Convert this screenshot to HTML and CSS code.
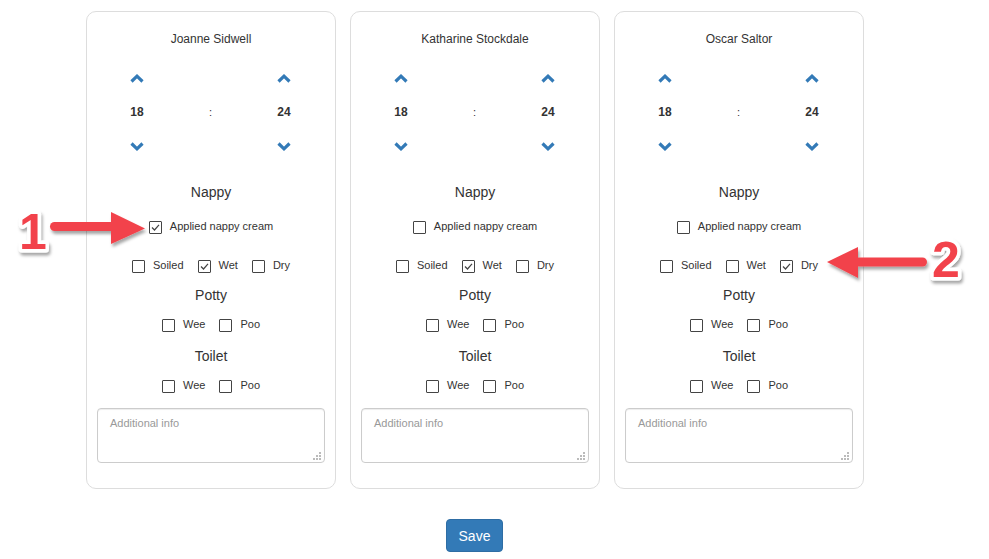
FILE: index.html
```html
<!DOCTYPE html>
<html>
<head>
<meta charset="utf-8">
<title>Nappy log</title>
<link rel="stylesheet" href="styles.css">
</head>
<body>
<div class="page">
  <div class="cards">
    <section class="card">
      <div class="name">Joanne Sidwell</div>
      <div class="timepicker">
        <span class="chev"><svg width="14" height="9" viewBox="0 0 14 9"><polyline points="1.5,7.5 7,2.2 12.5,7.5"/></svg></span><span></span><span class="chev"><svg width="14" height="9" viewBox="0 0 14 9"><polyline points="1.5,7.5 7,2.2 12.5,7.5"/></svg></span>
        <span class="num">18</span><span class="colon">:</span><span class="num">24</span>
        <span class="chev"><svg width="14" height="9" viewBox="0 0 14 9"><polyline points="1.5,1.5 7,6.8 12.5,1.5"/></svg></span><span></span><span class="chev"><svg width="14" height="9" viewBox="0 0 14 9"><polyline points="1.5,1.5 7,6.8 12.5,1.5"/></svg></span>
      </div>
      <div class="heading h-nappy">Nappy</div>
      <div class="row row-cream"><label class="check"><span class="box"><svg width="11" height="11" viewBox="0 0 11 11"><polyline points="2,5.5 4.5,8 9,2.8"/></svg></span>Applied nappy cream</label></div>
      <div class="row row-state">
        <label class="check"><span class="box"></span>Soiled</label>
        <label class="check"><span class="box"><svg width="11" height="11" viewBox="0 0 11 11"><polyline points="2,5.5 4.5,8 9,2.8"/></svg></span>Wet</label>
        <label class="check"><span class="box"></span>Dry</label>
      </div>
      <div class="heading h-potty">Potty</div>
      <div class="row row-potty">
        <label class="check"><span class="box"></span>Wee</label>
        <label class="check"><span class="box"></span>Poo</label>
      </div>
      <div class="heading h-toilet">Toilet</div>
      <div class="row row-toilet">
        <label class="check"><span class="box"></span>Wee</label>
        <label class="check"><span class="box"></span>Poo</label>
      </div>
      <div class="note">
        <textarea placeholder="Additional info"></textarea>
        <svg class="grip" width="8" height="8" viewBox="0 0 8 8"><rect x="6" y="0" width="2" height="2"/><rect x="3" y="3" width="2" height="2"/><rect x="6" y="3" width="2" height="2"/><rect x="0" y="6" width="2" height="2"/><rect x="3" y="6" width="2" height="2"/><rect x="6" y="6" width="2" height="2"/></svg>
      </div>
    </section>

    <section class="card">
      <div class="name">Katharine Stockdale</div>
      <div class="timepicker">
        <span class="chev"><svg width="14" height="9" viewBox="0 0 14 9"><polyline points="1.5,7.5 7,2.2 12.5,7.5"/></svg></span><span></span><span class="chev"><svg width="14" height="9" viewBox="0 0 14 9"><polyline points="1.5,7.5 7,2.2 12.5,7.5"/></svg></span>
        <span class="num">18</span><span class="colon">:</span><span class="num">24</span>
        <span class="chev"><svg width="14" height="9" viewBox="0 0 14 9"><polyline points="1.5,1.5 7,6.8 12.5,1.5"/></svg></span><span></span><span class="chev"><svg width="14" height="9" viewBox="0 0 14 9"><polyline points="1.5,1.5 7,6.8 12.5,1.5"/></svg></span>
      </div>
      <div class="heading h-nappy">Nappy</div>
      <div class="row row-cream"><label class="check"><span class="box"></span>Applied nappy cream</label></div>
      <div class="row row-state">
        <label class="check"><span class="box"></span>Soiled</label>
        <label class="check"><span class="box"><svg width="11" height="11" viewBox="0 0 11 11"><polyline points="2,5.5 4.5,8 9,2.8"/></svg></span>Wet</label>
        <label class="check"><span class="box"></span>Dry</label>
      </div>
      <div class="heading h-potty">Potty</div>
      <div class="row row-potty">
        <label class="check"><span class="box"></span>Wee</label>
        <label class="check"><span class="box"></span>Poo</label>
      </div>
      <div class="heading h-toilet">Toilet</div>
      <div class="row row-toilet">
        <label class="check"><span class="box"></span>Wee</label>
        <label class="check"><span class="box"></span>Poo</label>
      </div>
      <div class="note">
        <textarea placeholder="Additional info"></textarea>
        <svg class="grip" width="8" height="8" viewBox="0 0 8 8"><rect x="6" y="0" width="2" height="2"/><rect x="3" y="3" width="2" height="2"/><rect x="6" y="3" width="2" height="2"/><rect x="0" y="6" width="2" height="2"/><rect x="3" y="6" width="2" height="2"/><rect x="6" y="6" width="2" height="2"/></svg>
      </div>
    </section>

    <section class="card">
      <div class="name">Oscar Saltor</div>
      <div class="timepicker">
        <span class="chev"><svg width="14" height="9" viewBox="0 0 14 9"><polyline points="1.5,7.5 7,2.2 12.5,7.5"/></svg></span><span></span><span class="chev"><svg width="14" height="9" viewBox="0 0 14 9"><polyline points="1.5,7.5 7,2.2 12.5,7.5"/></svg></span>
        <span class="num">18</span><span class="colon">:</span><span class="num">24</span>
        <span class="chev"><svg width="14" height="9" viewBox="0 0 14 9"><polyline points="1.5,1.5 7,6.8 12.5,1.5"/></svg></span><span></span><span class="chev"><svg width="14" height="9" viewBox="0 0 14 9"><polyline points="1.5,1.5 7,6.8 12.5,1.5"/></svg></span>
      </div>
      <div class="heading h-nappy">Nappy</div>
      <div class="row row-cream"><label class="check"><span class="box"></span>Applied nappy cream</label></div>
      <div class="row row-state">
        <label class="check"><span class="box"></span>Soiled</label>
        <label class="check"><span class="box"></span>Wet</label>
        <label class="check"><span class="box"><svg width="11" height="11" viewBox="0 0 11 11"><polyline points="2,5.5 4.5,8 9,2.8"/></svg></span>Dry</label>
      </div>
      <div class="heading h-potty">Potty</div>
      <div class="row row-potty">
        <label class="check"><span class="box"></span>Wee</label>
        <label class="check"><span class="box"></span>Poo</label>
      </div>
      <div class="heading h-toilet">Toilet</div>
      <div class="row row-toilet">
        <label class="check"><span class="box"></span>Wee</label>
        <label class="check"><span class="box"></span>Poo</label>
      </div>
      <div class="note">
        <textarea placeholder="Additional info"></textarea>
        <svg class="grip" width="8" height="8" viewBox="0 0 8 8"><rect x="6" y="0" width="2" height="2"/><rect x="3" y="3" width="2" height="2"/><rect x="6" y="3" width="2" height="2"/><rect x="0" y="6" width="2" height="2"/><rect x="3" y="6" width="2" height="2"/><rect x="6" y="6" width="2" height="2"/></svg>
      </div>
    </section>
  </div>

  <div class="actions"><button class="btn">Save</button></div>

  <svg class="annot" width="989" height="559" viewBox="0 0 989 559">
    <defs>
      <filter id="sh" x="-20%" y="-20%" width="150%" height="160%">
        <feDropShadow dx="1.5" dy="3" stdDeviation="1.8" flood-color="#000" flood-opacity="0.35"/>
      </filter>
    </defs>
    <g filter="url(#sh)">
      <text class="mark" x="33" y="249">1</text>
      <rect class="arrow" x="50" y="222" width="66" height="9" rx="4.5"/>
      <polygon class="arrow" points="111,212 145,228.5 111,244"/>
    </g>
    <g filter="url(#sh)">
      <rect class="arrow" x="852" y="257.5" width="75" height="9" rx="4.5"/>
      <polygon class="arrow" points="858,247 827,262 858,278"/>
      <text class="mark" x="946" y="277">2</text>
    </g>
  </svg>
</div>
</body>
</html>
```

FILE: styles.css
```css
* { box-sizing: border-box; }

body {
  margin: 0;
  font-family: "Liberation Sans", Arial, sans-serif;
  color: #333;
  background: #fff;
}

.page {
  position: relative;
  width: 989px;
  height: 559px;
  padding: 11px 0 0 86px;
  overflow: hidden;
}

.cards {
  display: flex;
  gap: 14px;
}

.card {
  width: 250px;
  height: 478px;
  border: 1px solid #ddd;
  border-radius: 10px;
  display: flex;
  flex-direction: column;
}

.name {
  padding-top: 20px;
  font-size: 12px;
  line-height: 14px;
  text-align: center;
}

.timepicker {
  margin-top: 15px;
  padding: 0 31px 0 30px;
  display: grid;
  grid-template-columns: 40px 1fr 40px;
  grid-auto-rows: 34px;
  align-items: center;
  justify-items: center;
}

.chev { display: flex; }
.chev svg polyline {
  fill: none;
  stroke: #337ab7;
  stroke-width: 3.2;
  stroke-linejoin: miter;
}

.num {
  font-size: 12px;
  font-weight: bold;
  line-height: 14px;
}

.colon {
  font-size: 11px;
  line-height: 14px;
  color: #333;
}

.heading {
  font-size: 14px;
  line-height: 20px;
  text-align: center;
}

.h-nappy { margin-top: 19px; }
.h-potty { margin-top: 12px; }
.h-toilet { margin-top: 14px; }

.row {
  display: flex;
  justify-content: center;
  gap: 14px;
  height: 16px;
  align-items: center;
}

.row-cream { margin-top: 16px; }
.row-state { margin-top: 23px; }
.row-potty { margin-top: 11px; }
.row-toilet { margin-top: 11px; }

.check {
  display: flex;
  align-items: center;
  gap: 8px;
  font-size: 11px;
  line-height: 13px;
}

.box {
  width: 13px;
  height: 13px;
  border: 1px solid #444;
  border-radius: 1px;
  background: #fff;
  display: flex;
  align-items: center;
  justify-content: center;
  position: relative;
  top: 1px;
}

.box svg polyline {
  fill: none;
  stroke: #444;
  stroke-width: 1.2;
}

.note {
  position: relative;
  margin: 15px 10px 0;
}

.note textarea {
  display: block;
  width: 100%;
  height: 55px;
  resize: none;
  border: 1px solid #ccc;
  border-radius: 4px;
  box-shadow: inset 0 1px 1px rgba(0,0,0,0.075);
  padding: 8px 12px;
  font-family: "Liberation Sans", Arial, sans-serif;
  font-size: 11px;
  color: #333;
}

.note textarea::placeholder { color: #999; }

.grip {
  position: absolute;
  right: 4px;
  bottom: 3px;
  fill: #bbb;
}

.actions {
  width: 777px;
  margin-top: 30px;
  text-align: center;
}

.btn {
  height: 33px;
  padding: 0 12px;
  font-family: "Liberation Sans", Arial, sans-serif;
  font-size: 14px;
  color: #fff;
  background: #337ab7;
  border: 1px solid #2e6da4;
  border-radius: 4px;
}

.annot {
  position: absolute;
  top: 0;
  left: 0;
  pointer-events: none;
}

.arrow { fill: #f2434b; }

.mark {
  font-family: "Liberation Sans", Arial, sans-serif;
  font-weight: bold;
  font-size: 50px;
  text-anchor: middle;
  fill: #f2434b;
  stroke: #fff;
  stroke-width: 7;
  stroke-linejoin: round;
  paint-order: stroke;
}
```
